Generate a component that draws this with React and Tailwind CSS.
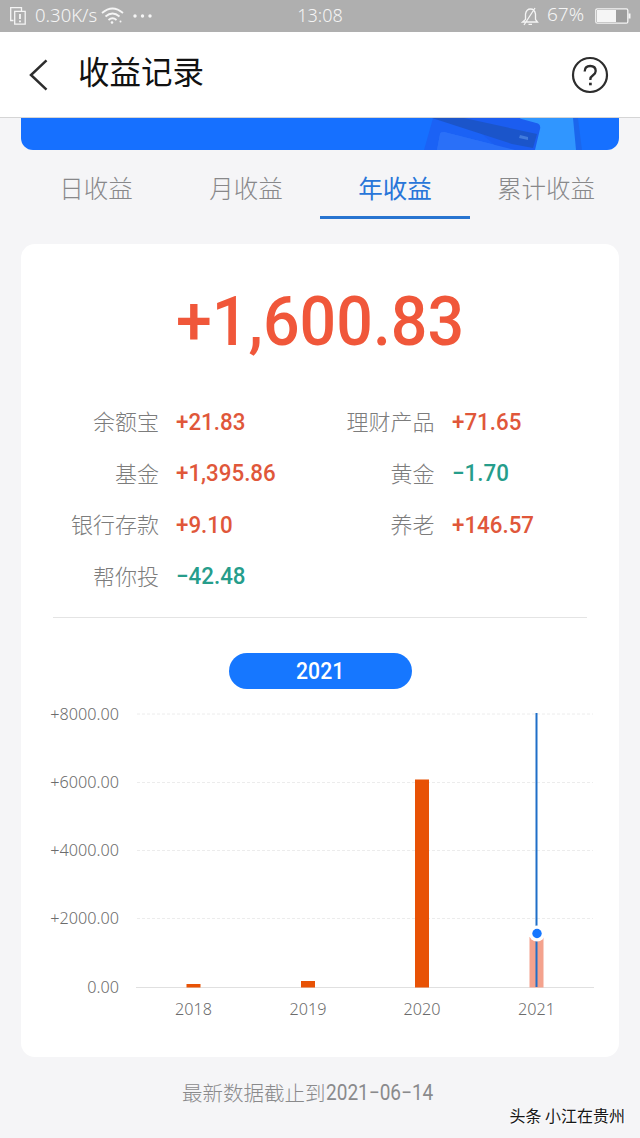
import React from 'react';

const TABS = ['日收益', '月收益', '年收益', '累计收益'];

const LEFT = [
  ['余额宝', '+21.83'],
  ['基金', '+1,395.86'],
  ['银行存款', '+9.10'],
  ['帮你投', '−42.48'],
];
const RIGHT = [
  ['理财产品', '+71.65'],
  ['黄金', '−1.70'],
  ['养老', '+146.57'],
];

const CJK = "font-['Noto_Sans_CJK_SC',sans-serif]";
const DIGITS = "font-[Roboto,'Noto_Sans_CJK_SC',sans-serif]";

function StatusBar() {
  return (
    <div className="flex h-8 items-center bg-[#afafaf] text-[19px] leading-8 text-[#f5f5f5] font-['Noto_Sans',sans-serif] font-light">
      <div className="flex flex-1 items-center pl-[9px]">
        <svg width="18" height="20" viewBox="0 0 18 20" fill="none" stroke="#f5f5f5" strokeWidth="1.3">
          <path d="M4.5 14.5H1.7V1.7h10.800V5" />
          <path d="M5.700 5.300h10.500v12.900H5.700z" />
          <path d="M11 8v5M11 14.500v1.700" strokeWidth="1.800" />
        </svg>
        <span className="ml-2 w-[66px] whitespace-nowrap -translate-y-px text-[18.5px]">0.30K/s</span>
        <svg width="24" height="20" viewBox="0 0 24 20" fill="none" stroke="#f5f5f5" strokeWidth="1.8">
          <path d="M1 7Q11.500 -2 22 7M4.500 10.500Q11.500 4.500 18.500 10.500M7.500 14Q11.500 10.500 15.500 14" />
          <circle cx="11" cy="16.500" r="1.300" fill="#f5f5f5" stroke="none" />
          <circle cx="19.500" cy="15.500" r="1" fill="#f5f5f5" stroke="none" />
        </svg>
        <svg className="ml-2" width="20" height="4" viewBox="0 0 20 4" fill="#f5f5f5">
          <circle cx="2" cy="2" r="1.700" />
          <circle cx="9.500" cy="2" r="1.700" />
          <circle cx="17" cy="2" r="1.700" />
        </svg>
      </div>
      <div className="w-[48px] whitespace-nowrap -translate-y-px text-center text-[18px]">13:08</div>
      <div className="flex flex-1 items-center justify-end pr-[9px]">
        <svg width="18" height="19" viewBox="0 0 18 19" fill="none" stroke="#f5f5f5" strokeWidth="1.300">
          <path d="M1.500 15H16.500L14.500 12.500V7Q13.500 2 9.500 2T4.500 7v5.500zM14 1L3 18M7.500 17.300h3.500" />
        </svg>
        <span className="ml-[8px] w-[40px] whitespace-nowrap -translate-y-[2px] text-[19px]">67%</span>
        <svg className="ml-2" width="36" height="18" viewBox="0 0 36 18">
          <rect x="0.800" y="1.800" width="32" height="14.400" rx="1.500" fill="#9d9d9d" stroke="#f5f5f5" strokeWidth="1.300" />
          <rect x="2" y="3" width="19" height="12" fill="#f5f5f5" />
          <rect x="33.500" y="6.500" width="2" height="5" fill="#f5f5f5" />
        </svg>
      </div>
    </div>
  );
}

function Header() {
  return (
    <div className="flex h-[86px] items-center border-b border-[#d5d5d5] bg-white pl-[28px] pr-[30px]">
      <svg width="22" height="32" viewBox="0 0 22 32" fill="none" stroke="#2d2d2d" strokeWidth="2.500">
        <path d="M18.500 1.300L3 16l15.500 14.700" />
      </svg>
      <h1 className={`ml-[28px] flex-1 -translate-y-[5px] text-[31.500px] font-normal leading-10 text-[#111] ${CJK}`}>收益记录</h1>
      <svg width="40" height="40" viewBox="0 0 40 40" fill="none" stroke="#2d2d2d">
        <circle cx="20" cy="20" r="17" strokeWidth="2.200" />
        <path d="M14.700 16.500Q14.700 11 20.200 11T25.700 16Q25.700 18.300 23 20.200T20.400 24V25" strokeWidth="2.300" />
        <path d="M20.400 27.700V30.300" strokeWidth="2.700" />
      </svg>
    </div>
  );
}

function Banner() {
  return (
    <div className="mx-[21px] flex h-8 justify-end overflow-hidden rounded-b-[12px] bg-[#1670ff]">
      <svg width="198" height="32" viewBox="421 118 198 32">
        <path d="M433 118H522L540 150H424z" fill="#1b62f5" />
        <path d="M440 134Q440 132 444 132L515 150H437z" fill="#2a70f8" />
        <path d="M544 118H574L577 150H535z" fill="#3096ff" />
        <path d="M520 118H573L576 150H530z" fill="#3096ff" />
        <path d="M573 118h5l4 32h-6z" fill="#1b66ed" />
        <path d="M464 118H518L538 123.500Q541 125 540 129L535 150H500z" fill="#1b5df0" />
        <path d="M440 134Q440 132 444 132L515 150H437z" fill="#2a70f8" />
        <path d="M432 118H464L537 134L533 148L512 144z" fill="#1b55ca" />
        <path d="M520 135l8 2v3l-9-2z" fill="#427bdc" />
      </svg>
    </div>
  );
}

function Tabs() {
  return (
    <div className={`mx-5 flex h-[69px] text-[24.500px] font-light ${CJK}`}>
      {TABS.map((t, i) => (
        <div
          key={t}
          className={
            i === 2
              ? 'flex w-[150px] justify-center border-b-[3px] border-[#2874d0] pt-[18px] leading-10 font-normal text-[#2876d9]'
              : 'flex w-[150px] justify-center border-b-[3px] border-transparent pl-[2px] pt-[18px] leading-10 text-[#88888a]'
          }
        >
          {t}
        </div>
      ))}
    </div>
  );
}

function Row({ label, value, labelWidth }) {
  return (
    <div className="flex h-[51.500px] items-center">
      <div className={`${labelWidth} -translate-y-px text-right text-[22px] font-light text-[#7c7c7c] ${CJK}`}>{label}</div>
      <div
        className={`ml-[17px] origin-left scale-x-[0.930] whitespace-nowrap text-[24px] font-medium ${DIGITS} ${
          value[0] === '+' ? 'text-[#e0573a]' : 'text-[#269d8b]'
        }`}
      >
        {value}
      </div>
    </div>
  );
}

const GRID = [
  ['+8000.00', 714],
  ['+6000.00', 782.5],
  ['+4000.00', 850.5],
  ['+2000.00', 918.5],
];
const BARS = [
  ['2018', 193.5, 984],
  ['2019', 308, 981],
  ['2020', 422, 779.5],
  ['2021', 536.5, 937],
];

function Chart() {
  return (
    <svg className="block font-['Noto_Sans',sans-serif] font-light" width="598" height="330" viewBox="21 700 598 330" fontSize="16.200" fill="#6c6c6c">
      {GRID.map(([label, y]) => (
        <g key={label}>
          <text x="119" y={y + 5.5} textAnchor="end">{label}</text>
          <path d={`M137 ${y}H593`} stroke="#ececec" strokeWidth="1" strokeDasharray="3 2" />
        </g>
      ))}
      <text x="119" y="992.500" textAnchor="end">0.00</text>
      <path d="M136 987.500H594" stroke="#e0e0e0" />
      {BARS.map(([year, x, top]) => (
        <g key={year}>
          <rect x={x - 7} y={top} width="14" height={987.5 - top} fill={year === '2021' ? '#f4a28d' : '#e85205'} />
          <text x={x} y="1015" textAnchor="middle">{year}</text>
        </g>
      ))}
      <path d="M536.500 713V987" stroke="#1f6fc8" strokeWidth="2" />
      <circle cx="537" cy="933.500" r="8" fill="#fff" />
      <circle cx="537" cy="933.500" r="4.700" fill="#1677ff" />
    </svg>
  );
}

export default function App() {
  return (
    <div className="flex h-[1138px] w-[640px] flex-col overflow-hidden bg-[#f5f5f7]">
      <StatusBar />
      <Header />
      <Banner />
      <Tabs />
      <main className="mx-[21px] mt-[25px] flex h-[813px] shrink-0 flex-col rounded-[14px] bg-white">
        <div className={`mt-[38px] flex h-20 items-center justify-center whitespace-nowrap text-[69px] font-medium text-[#f0573a] ${DIGITS}`}>
          <span className="scale-x-[0.935]">+1,600.83</span>
        </div>
        <div className="mt-[34px] flex h-[206px]">
          <div className="w-[275.500px]">
            {LEFT.map(([l, v]) => <Row key={l} label={l} value={v} labelWidth="w-[138px]" />)}
          </div>
          <div>
            {RIGHT.map(([l, v]) => <Row key={l} label={l} value={v} labelWidth="w-[138px]" />)}
          </div>
        </div>
        <div className="mx-8 mt-[15px] h-px bg-[#e4e4e4]" />
        <div className={`mx-auto mt-[35px] flex h-9 w-[183px] items-center justify-center rounded-full bg-[#1677ff] pt-[2px] text-[23px] font-medium text-white ${DIGITS}`}>
          <span className="scale-x-[0.920]">2021</span>
        </div>
        <div className="mt-[11px]"><Chart /></div>
      </main>
      <footer className={`relative h-[81px] shrink-0 ${CJK}`}>
        <div className="flex items-center whitespace-nowrap pl-[182px] pt-[19px] text-[20.500px] font-light leading-8 text-[#8a8a8c]">
          <span>最新数据截止到</span>
          <span className={`origin-left translate-y-px scale-x-[0.885] text-[21.500px] font-normal ${DIGITS}`}>2021−06−14</span>
        </div>
        <div className="absolute right-[15px] top-[46px] whitespace-nowrap text-[16px] leading-6 text-[#171717] [text-shadow:1px_1px_0_#fff]">头条 小江在贵州</div>
      </footer>
    </div>
  );
}
